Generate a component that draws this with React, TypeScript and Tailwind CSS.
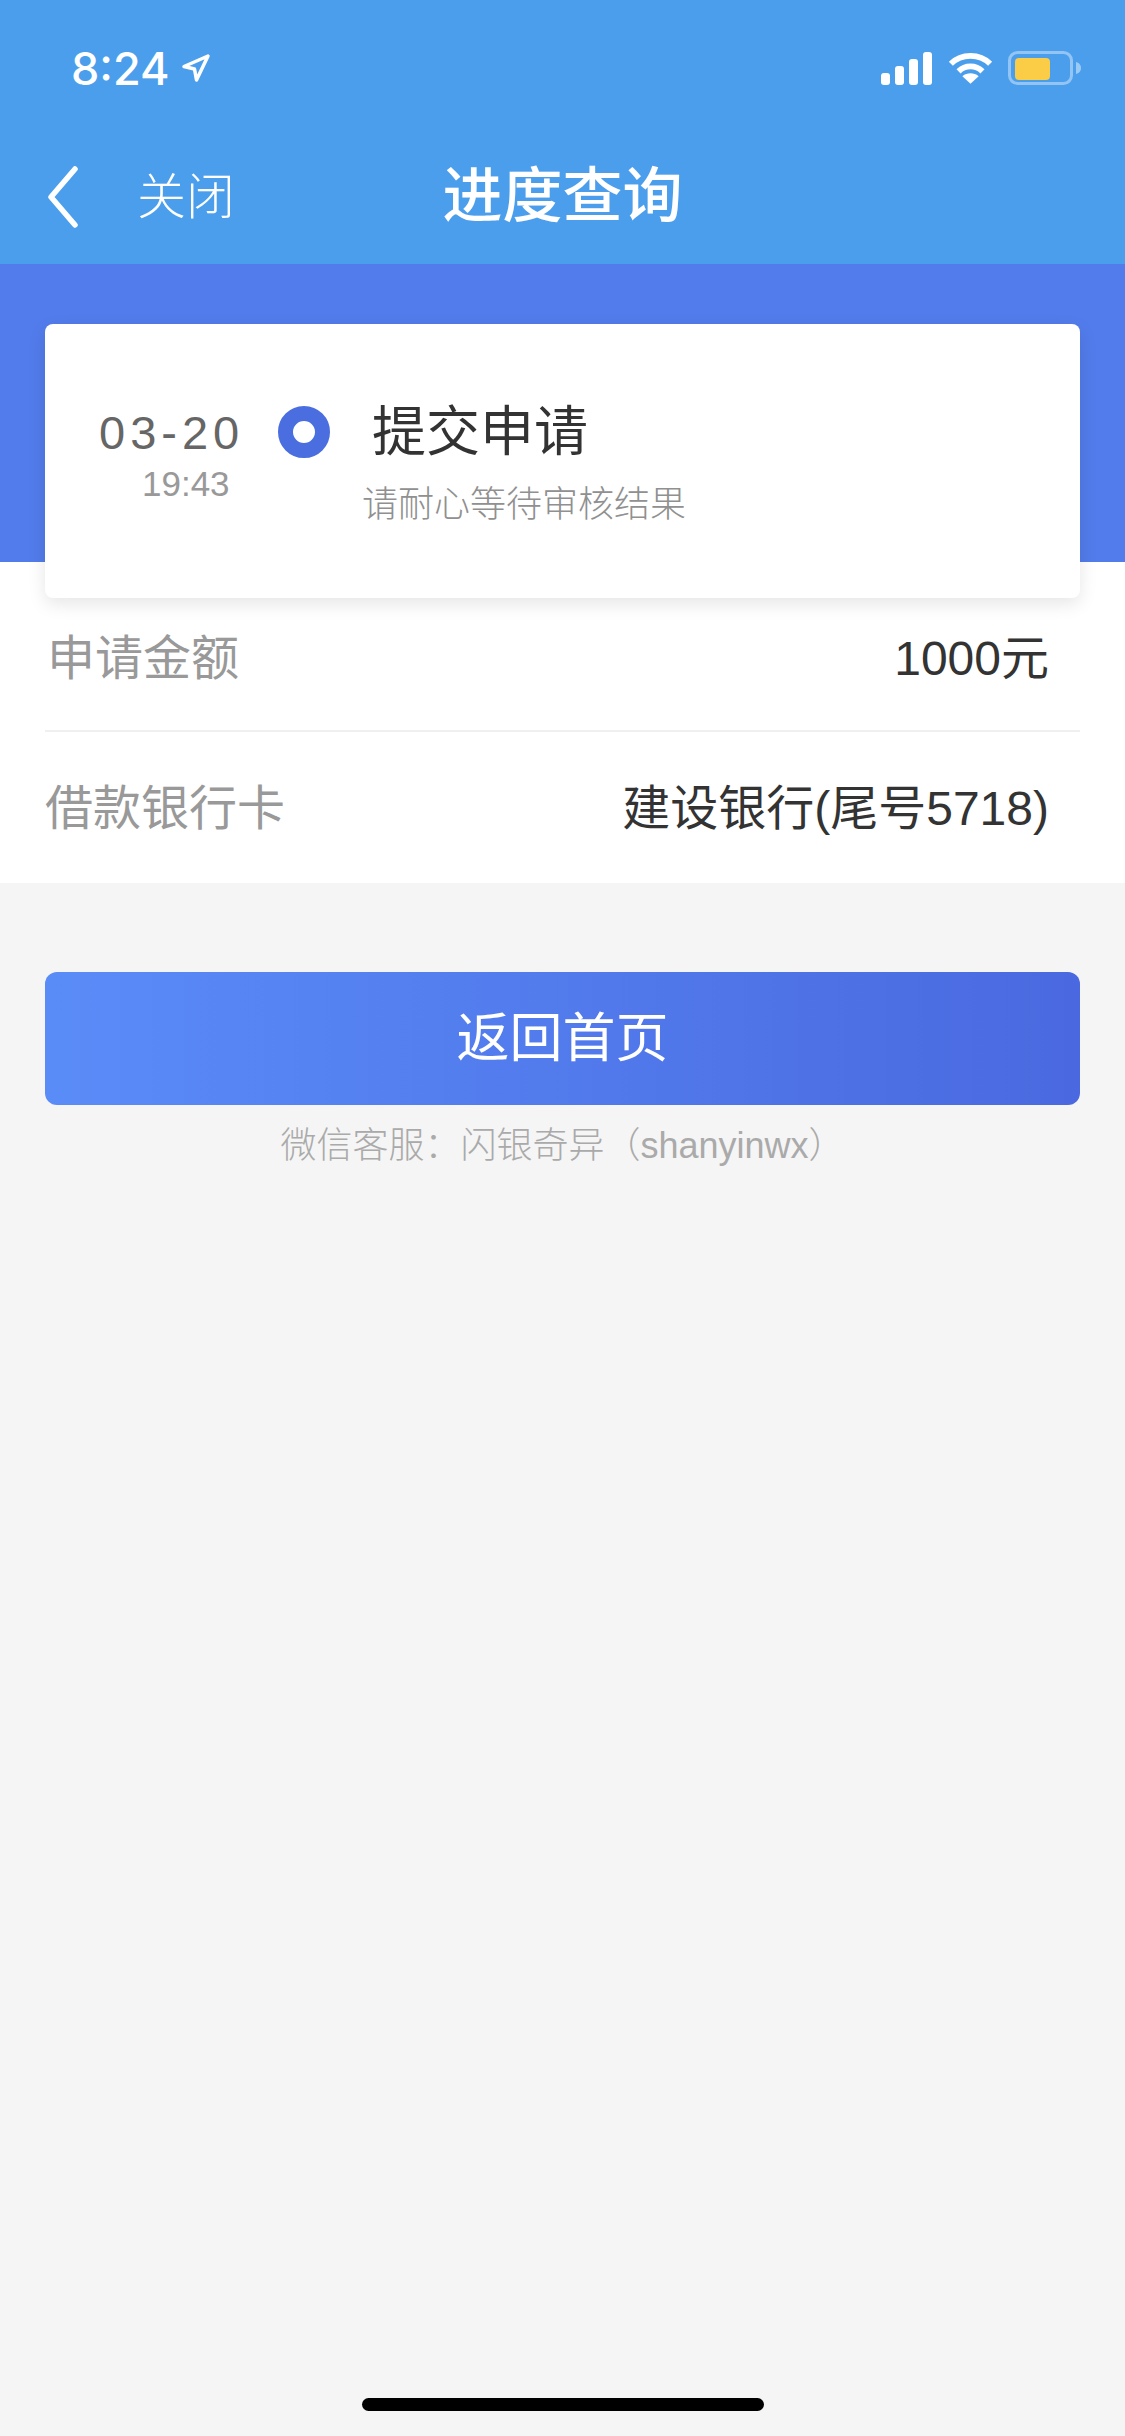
const cjk = "font-['Liberation_Sans','Noto_Sans_CJK_SC',sans-serif]";

function StatusIcons() {
  return (
    <div className="flex items-center">
      <svg width="52" height="33" viewBox="0 0 52 33" fill="white">
        <rect x="0" y="21" width="9" height="12" rx="3" />
        <rect x="14" y="14" width="9" height="19" rx="3" />
        <rect x="28" y="7" width="9" height="26" rx="3" />
        <rect x="42" y="0" width="9" height="33" rx="3" />
      </svg>
      <svg className="ml-[15px]" width="45" height="33" viewBox="0 0 47 34" fill="none" stroke="white" strokeWidth="6">
        <path d="M3 12 C14 1 33 1 44 12" />
        <path d="M11 20 C18 13 29 13 36 20" />
        <path d="M15 25 L23.5 33 L32 25 C27 21 20 21 15 25 Z" fill="white" stroke="none" />
      </svg>
      <svg className="ml-[15px]" width="74" height="34" viewBox="0 0 74 34" fill="none">
        <rect x="1.5" y="1.5" width="62" height="31" rx="8" stroke="white" strokeOpacity="0.4" strokeWidth="3" />
        <rect x="7" y="7" width="35" height="22" rx="4" fill="#fbcc45" />
        <path d="M68 11 C72 12 73 15 73 17 C73 19 72 22 68 23 Z" fill="white" fillOpacity="0.45" />
      </svg>
    </div>
  );
}

function Header() {
  return (
    <header className="bg-[#4a9eec] h-[264px] text-white pt-[34px]">
      <div className="flex items-center justify-between h-[68px] pl-[71px] pr-[43px]">
        <div className="flex items-center">
          <span className="font-['Inter',sans-serif] font-medium text-[45px] leading-none">8:24</span>
          <svg className="ml-[10px]" width="32" height="30" viewBox="0 0 32 30" fill="none" stroke="white" strokeWidth="3.5" strokeLinejoin="round">
            <path d="M28 3 L4 13.5 L14.5 16 L16.5 27 Z" />
          </svg>
        </div>
        <StatusIcons />
      </div>
      <div className="mt-[60px] h-[70px] grid grid-cols-[1fr_auto_1fr] items-center">
        <div className="flex items-center pl-[47px]">
          <svg width="32" height="62" viewBox="0 0 32 62" fill="none" stroke="white" strokeWidth="5.5" strokeLinecap="round" strokeLinejoin="round">
            <path d="M28 3 L4 31 L28 59" />
          </svg>
          <span className={`${cjk} ml-[58px] text-[49px] font-light leading-none`}>关闭</span>
        </div>
        <span className={`${cjk} text-[60px] font-medium leading-none`}>进度查询</span>
      </div>
    </header>
  );
}

function ProgressCard() {
  return (
    <section className="bg-[#527ceb] h-[298px] px-[45px] pt-[60px]">
      <div className="bg-white h-[274px] rounded-lg shadow-[0_6px_18px_rgba(0,0,0,0.1)] flex relative">
        <div className="w-[233px] shrink-0 pt-[85px] pl-[54px]">
          <div className="font-['Liberation_Sans',sans-serif] text-[47px] leading-[47px] tracking-[5px] text-[#666] whitespace-nowrap">03-20</div>
          <div className="font-['Liberation_Sans',sans-serif] text-[35px] leading-[36px] mt-[10px] text-[#999] pl-[43px]">19:43</div>
        </div>
        <div className="w-[52px] h-[52px] mt-[82px] rounded-full border-[15px] border-[#4a6ee0] bg-white shrink-0" />
        <div className="pt-[78px]">
          <div className={`${cjk} ml-[42px] text-[54px] leading-[60px] text-[#333] whitespace-nowrap`}>提交申请</div>
          <div className={`${cjk} ml-[32px] mt-[23px] text-[36px] leading-[40px] text-[#909090] font-light whitespace-nowrap`}>请耐心等待审核结果</div>
        </div>
      </div>
    </section>
  );
}

function InfoRow({ label, value, last }: { label: string; value: string; last?: boolean }) {
  return (
    <div className={`flex items-center justify-between pr-[31px] ${last ? "h-[151px] pt-[2px]" : "h-[135px] pb-[10px] pl-[2px] border-b-2 border-[#f0f0f0]"}`}>
      <span className={`${cjk} text-[48px] text-[#999] leading-none`}>{label}</span>
      <span className={`${cjk} text-[48px] text-[#333] leading-none`}>{value}</span>
    </div>
  );
}

export default function App() {
  return (
    <div className="w-[1125px] h-[2436px] bg-[#f5f5f5] flex flex-col overflow-hidden">
      <Header />
      <ProgressCard />
      <div className="bg-white pt-[35px] px-[45px]">
        <InfoRow label="申请金额" value="1000元" />
        <InfoRow label="借款银行卡" value="建设银行(尾号5718)" last />
      </div>
      <div className="px-[45px] pt-[89px]">
        <button className="w-full h-[133px] rounded-xl bg-gradient-to-r from-[#5a8cf8] to-[#4a69e0] text-white flex items-center justify-center">
          <span className={`${cjk} text-[53px] leading-none`}>返回首页</span>
        </button>
        <p className={`${cjk} mt-[18px] text-center text-[36px] leading-[46px] text-[#aaa] font-light`}>微信客服：闪银奇异（shanyinwx）</p>
      </div>
      <div className="mt-auto mb-[25px] mx-auto w-[402px] h-[13px] rounded-full bg-black" />
    </div>
  );
}
